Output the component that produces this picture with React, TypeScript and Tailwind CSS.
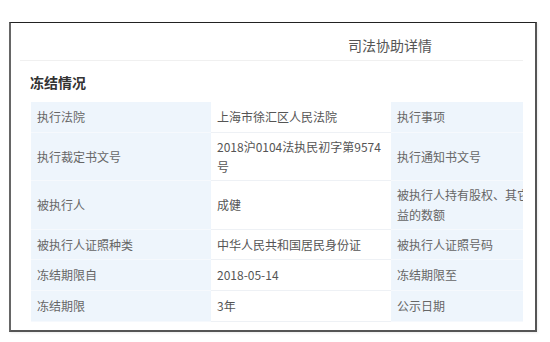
import React from "react";

const rows: { h: string; cells: [string, string, string, string] }[] = [
  { h: "h-[31px]", cells: ["执行法院", "上海市徐汇区人民法院", "执行事项", ""] },
  { h: "h-[48px]", cells: ["执行裁定书文号", "2018沪0104法执民初字第9574号", "执行通知书文号", ""] },
  { h: "h-[49px]", cells: ["被执行人", "成健", "被执行人持有股权、其它投资权益的数额", ""] },
  { h: "h-[30px]", cells: ["被执行人证照种类", "中华人民共和国居民身份证", "被执行人证照号码", ""] },
  { h: "h-[31px]", cells: ["冻结期限自", "2018-05-14", "冻结期限至", ""] },
  { h: "h-[31px]", cells: ["冻结期限", "3年", "公示日期", ""] },
];

export default function App() {
  return (
    <div
      className="w-[550px] h-[342px] bg-white overflow-hidden"
      style={{ fontFamily: '"Noto Sans CJK SC", "Noto Sans", sans-serif' }}
    >
      <div className="ml-[9px] mt-[22px] w-[528px] h-[310px] border-t border-t-[#222] border-l-2 border-l-[#666] border-r-2 border-r-[#555] border-b-2 border-b-[#555] bg-white shadow-[1px_1px_2px_rgba(0,0,0,0.08)]">
        <div className="ml-[9px] w-[503px] h-full overflow-hidden">
          <div className="w-[740px]">
            <div className="pt-[12px] pb-[5px] border-b border-[#f0f0f0] text-center text-[14px] leading-[20px] text-[#555]">
              司法协助详情
            </div>
            <div className="pl-[10px] mt-[11px] mb-[10px] text-[14px] leading-[20px] font-semibold text-[#333]">
              冻结情况
            </div>
            <div className="pl-[11px]">
              {rows.map((r, i) => (
                <div key={i} className={`flex ${r.h}`}>
                  {r.cells.map((c, j) => (
                    <div
                      key={j}
                      className={`w-[180px] shrink-0 flex items-center px-[6px] text-[12px] leading-[20px] border-b ${
                        j % 2 === 0
                          ? "bg-[#eef5fc] border-[#f6f9fd] text-[#666]"
                          : "bg-white border-[#eef1f5] text-[#555]"
                      }`}
                    >
                      <span className="break-all">{c}</span>
                    </div>
                  ))}
                </div>
              ))}
            </div>
          </div>
        </div>
      </div>
    </div>
  );
}
